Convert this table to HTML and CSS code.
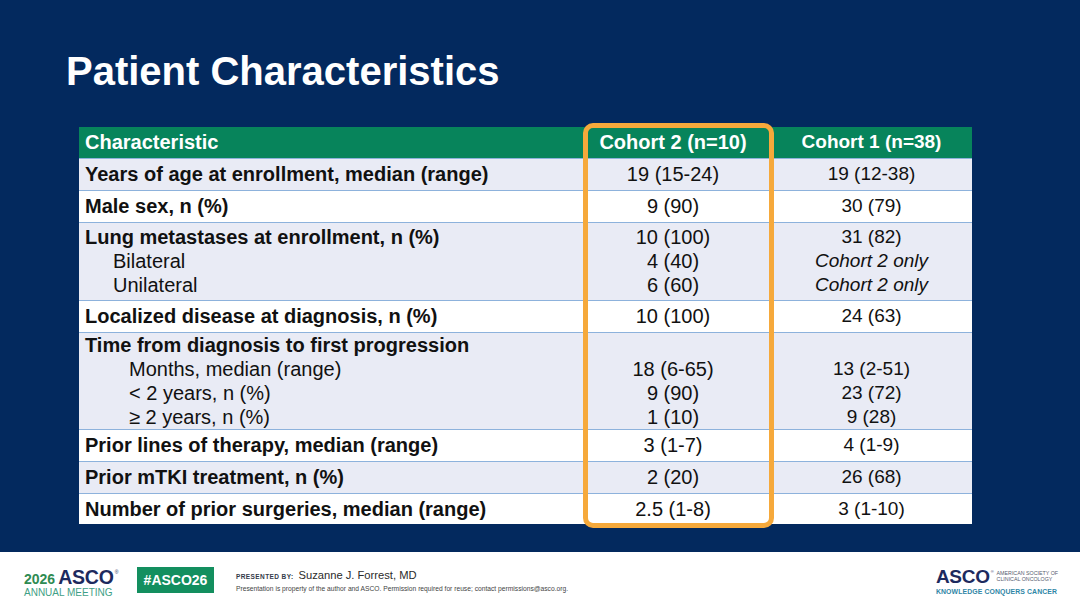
FILE: index.html
```html
<!DOCTYPE html>
<html lang="en">
<head>
<meta charset="utf-8">
<title>Patient Characteristics</title>
<link rel="stylesheet" href="styles.css">
</head>
<body>
<div class="slide">
  <main class="main">
    <h1 class="title">Patient Characteristics</h1>
    <div class="table-wrap">
      <table class="chars">
        <colgroup><col class="c1"><col class="c2"><col class="c3"></colgroup>
        <thead>
          <tr class="hd">
            <th class="lab">Characteristic</th>
            <th class="v2">Cohort 2 (n=10)</th>
            <th class="v3">Cohort 1 (n=38)</th>
          </tr>
        </thead>
        <tbody>
          <tr class="alt r1">
            <td class="lab">Years of age at enrollment, median (range)</td>
            <td class="v2">19 (15-24)</td>
            <td class="v3">19 (12-38)</td>
          </tr>
          <tr class="r1">
            <td class="lab">Male sex, n (%)</td>
            <td class="v2">9 (90)</td>
            <td class="v3">30 (79)</td>
          </tr>
          <tr class="alt r3">
            <td class="lab">
              <div class="ln">Lung metastases at enrollment, n (%)</div>
              <div class="ln sub">Bilateral</div>
              <div class="ln sub">Unilateral</div>
            </td>
            <td class="v2">
              <div class="ln">10 (100)</div>
              <div class="ln">4 (40)</div>
              <div class="ln">6 (60)</div>
            </td>
            <td class="v3">
              <div class="ln">31 (82)</div>
              <div class="ln em">Cohort 2 only</div>
              <div class="ln em">Cohort 2 only</div>
            </td>
          </tr>
          <tr class="r1">
            <td class="lab">Localized disease at diagnosis, n (%)</td>
            <td class="v2">10 (100)</td>
            <td class="v3">24 (63)</td>
          </tr>
          <tr class="alt r5">
            <td class="lab">
              <div class="ln">Time from diagnosis to first progression</div>
              <div class="ln sub2">Months, median (range)</div>
              <div class="ln sub2">&lt; 2 years, n (%)</div>
              <div class="ln sub2">&ge; 2 years, n (%)</div>
            </td>
            <td class="v2">
              <div class="ln">&nbsp;</div>
              <div class="ln">18 (6-65)</div>
              <div class="ln">9 (90)</div>
              <div class="ln">1 (10)</div>
            </td>
            <td class="v3">
              <div class="ln">&nbsp;</div>
              <div class="ln">13 (2-51)</div>
              <div class="ln">23 (72)</div>
              <div class="ln">9 (28)</div>
            </td>
          </tr>
          <tr class="r1">
            <td class="lab">Prior lines of therapy, median (range)</td>
            <td class="v2">3 (1-7)</td>
            <td class="v3">4 (1-9)</td>
          </tr>
          <tr class="alt r1">
            <td class="lab">Prior mTKI treatment, n (%)</td>
            <td class="v2">2 (20)</td>
            <td class="v3">26 (68)</td>
          </tr>
          <tr class="r8">
            <td class="lab">Number of prior surgeries, median (range)</td>
            <td class="v2">2.5 (1-8)</td>
            <td class="v3">3 (1-10)</td>
          </tr>
        </tbody>
      </table>
      <div class="highlight"></div>
    </div>
  </main>
  <footer class="footer">
    <div class="meeting">
      <div class="meeting-top"><span class="year">2026</span><span class="asco">ASCO</span><span class="reg">®</span></div>
      <div class="meeting-sub">ANNUAL MEETING</div>
    </div>
    <div class="tag">#ASCO26</div>
    <div class="presenter">
      <div class="pres-line"><span class="pres-by">PRESENTED BY:</span><span class="pres-name">Suzanne J. Forrest, MD</span></div>
      <div class="pres-note">Presentation is property of the author and ASCO. Permission required for reuse; contact permissions@asco.org.</div>
    </div>
    <div class="society">
      <div class="society-top">
        <span class="asco2">ASCO</span><span class="reg2">®</span>
        <span class="soc-name"><span>AMERICAN SOCIETY OF</span><span>CLINICAL ONCOLOGY</span></span>
      </div>
      <div class="kcc">KNOWLEDGE CONQUERS CANCER</div>
    </div>
  </footer>
</div>
</body>
</html>
```

FILE: styles.css
```css
* { box-sizing: border-box; }
html, body { margin: 0; padding: 0; }
body {
  font-family: "Liberation Sans", Arial, sans-serif;
  background: #ffffff;
}
.slide {
  width: 1080px;
  height: 608px;
  display: flex;
  flex-direction: column;
  overflow: hidden;
}
.main {
  height: 552px;
  background: #03295e;
  padding-top: 48px;
}
.title {
  margin: 0 0 0 66px;
  font-size: 40px;
  line-height: 46px;
  font-weight: 700;
  color: #ffffff;
}
.table-wrap {
  position: relative;
  width: 893px;
  margin: 33px 0 0 79px;
}
.chars {
  width: 893px;
  border-collapse: collapse;
  table-layout: fixed;
  color: #111111;
}
.c1 { width: 496px; }
.c2 { width: 196px; }
.c3 { width: 201px; }
.chars th, .chars td {
  padding: 0;
  vertical-align: middle;
}
.hd { height: 31px; }
.hd th {
  background: #07845b;
  color: #ffffff;
  font-size: 20px;
  font-weight: 700;
  line-height: 24px;
}
.hd th.lab { text-align: left; padding-left: 6px; }
.hd th.v3 { font-size: 19px; }
.chars tbody td {
  background: #ffffff;
  border-top: 1px solid #8db2dc;
  font-size: 20px;
  line-height: 24px;
}
.chars tbody tr.alt td { background: #e9ebf5; }
.chars td.lab {
  font-weight: 700;
  text-align: left;
  padding-left: 6px;
}
.chars td.v2 { text-align: center; }
.chars td.v3 { text-align: center; font-size: 19px; }
.r1 { height: 32px; }
.r3 { height: 78px; }
.r5 { height: 97px; }
.r8 { height: 31px; }
.ln { line-height: 24px; }
.sub { font-weight: 400; padding-left: 28px; }
.sub2 { font-weight: 400; padding-left: 44px; }
.em { font-style: italic; }
.highlight {
  position: absolute;
  left: 504px;
  top: -4px;
  width: 191px;
  height: 405px;
  border: 5px solid #f6a93b;
  border-radius: 10px;
  pointer-events: none;
}

/* footer */
.footer {
  height: 56px;
  display: flex;
  align-items: flex-start;
  background: #ffffff;
  padding-left: 24px;
}
.meeting {
  margin-top: 16px;
  width: 98px;
}
.meeting-top {
  display: flex;
  align-items: baseline;
  line-height: 18px;
  height: 18px;
}
.year {
  font-size: 14px;
  font-weight: 700;
  color: #2f8b52;
  margin-right: 3px;
}
.asco {
  font-size: 19.5px;
  font-weight: 700;
  color: #1d2a5e;
  letter-spacing: -0.2px;
}
.reg {
  font-size: 5px;
  color: #1d2a5e;
  align-self: flex-start;
  line-height: 8px;
  margin-left: 1px;
}
.meeting-sub {
  font-size: 10px;
  line-height: 10px;
  margin-top: 2px;
  color: #3f9f86;
  white-space: nowrap;
}
.tag {
  margin: 15px 0 0 15px;
  width: 77px;
  height: 26px;
  background: #138f5f;
  color: #ffffff;
  font-size: 14px;
  font-weight: 700;
  line-height: 26px;
  text-align: center;
}
.presenter {
  margin: 16px 0 0 22px;
}
.pres-line {
  display: flex;
  align-items: baseline;
  line-height: 14px;
  height: 14px;
}
.pres-by {
  font-size: 6.5px;
  font-weight: 700;
  color: #333a4a;
  letter-spacing: 0.4px;
  margin-right: 5px;
}
.pres-name {
  font-size: 11.2px;
  color: #2b2b2b;
}
.pres-note {
  font-size: 6.7px;
  line-height: 10px;
  margin-top: 2px;
  color: #444444;
  white-space: nowrap;
}
.society {
  margin: 16px 0 0 auto;
  padding-right: 22px;
}
.society-top {
  display: flex;
  align-items: flex-start;
  height: 17px;
}
.asco2 {
  font-size: 19px;
  font-weight: 700;
  color: #1d2a5e;
  line-height: 17px;
  letter-spacing: -0.3px;
}
.reg2 {
  font-size: 4px;
  line-height: 6px;
  color: #1d2a5e;
  margin: 1px 3px 0 1px;
}
.soc-name {
  display: flex;
  flex-direction: column;
  font-size: 5.3px;
  line-height: 6px;
  color: #555b6e;
  margin-top: 2px;
  white-space: nowrap;
}
.kcc {
  font-size: 6.9px;
  font-weight: 700;
  line-height: 10px;
  margin-top: 2px;
  color: #2f86a6;
  letter-spacing: 0.1px;
  white-space: nowrap;
}
```
